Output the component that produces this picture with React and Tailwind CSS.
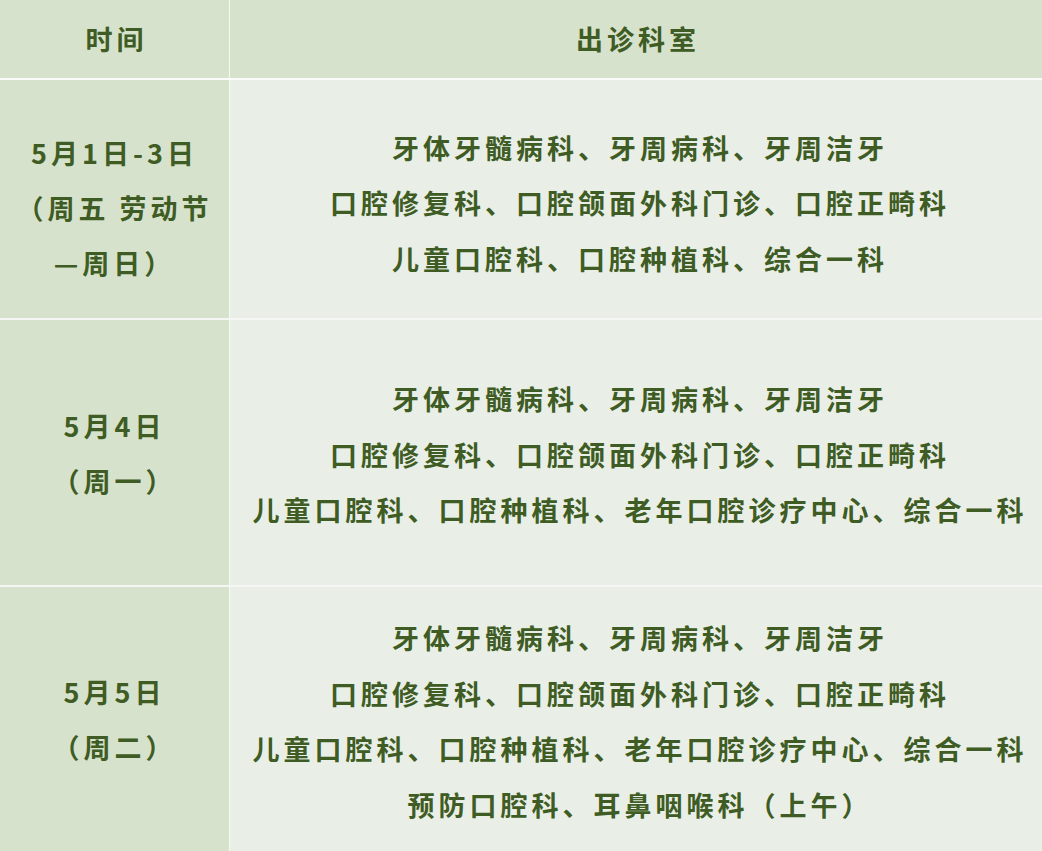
import React from "react";

const font = {
  fontFamily: '"Noto Sans CJK SC", "Noto Sans", sans-serif',
};

const line1 = "牙体牙髓病科、牙周病科、牙周洁牙";
const line2 = "口腔修复科、口腔颌面外科门诊、口腔正畸科";

const rows = [
  {
    h: "h-[240px]",
    leftPad: "pt-[16px]",
    rightPad: "pt-[8px]",
    left: ["5月1日-3日", "（周五 劳动节", "—周日）"],
    right: [line1, line2, "儿童口腔科、口腔种植科、综合一科"],
  },
  {
    h: "h-[267px]",
    leftPad: "pt-0",
    rightPad: "pt-[4px]",
    left: ["5月4日", "（周一）"],
    right: [line1, line2, "儿童口腔科、口腔种植科、老年口腔诊疗中心、综合一科"],
  },
  {
    h: "h-[264px]",
    leftPad: "pt-0",
    rightPad: "pt-[4px]",
    left: ["5月5日", "（周二）"],
    right: [
      line1,
      line2,
      "儿童口腔科、口腔种植科、老年口腔诊疗中心、综合一科",
      "预防口腔科、耳鼻咽喉科（上午）",
    ],
  },
];

export default function App() {
  return (
    <div
      className="w-[1042px] h-[851px] overflow-hidden bg-[#e9efe7] text-[#3e5c23] text-[27px] font-bold tracking-[4px]"
      style={font}
    >
      <div className="flex h-[80px] bg-[#d7e2cc] border-b-2 border-[#fbfcfa]">
        <div className="w-[230px] shrink-0 border-r border-[#f7f9f5] flex items-center justify-center pl-1">
          时间
        </div>
        <div className="flex-1 flex items-center justify-center pl-1">出诊科室</div>
      </div>
      {rows.map((r, i) => (
        <div
          key={i}
          className={`flex ${r.h} ${i < rows.length - 1 ? "border-b-2 border-white/50" : ""}`}
        >
          <div
            className={`w-[230px] shrink-0 bg-[#d7e2cc] border-r border-[#f7f9f5] flex flex-col items-center justify-center leading-[55px] ${r.leftPad}`}
          >
            {r.left.map((t, j) => (
              <div key={j} className="whitespace-pre">
                {t}
              </div>
            ))}
          </div>
          <div
            className={`flex-1 flex flex-col items-center justify-center leading-[55.5px] pl-2 ${r.rightPad}`}
          >
            {r.right.map((t, j) => (
              <div key={j} className="whitespace-nowrap">
                {t}
              </div>
            ))}
          </div>
        </div>
      ))}
    </div>
  );
}
